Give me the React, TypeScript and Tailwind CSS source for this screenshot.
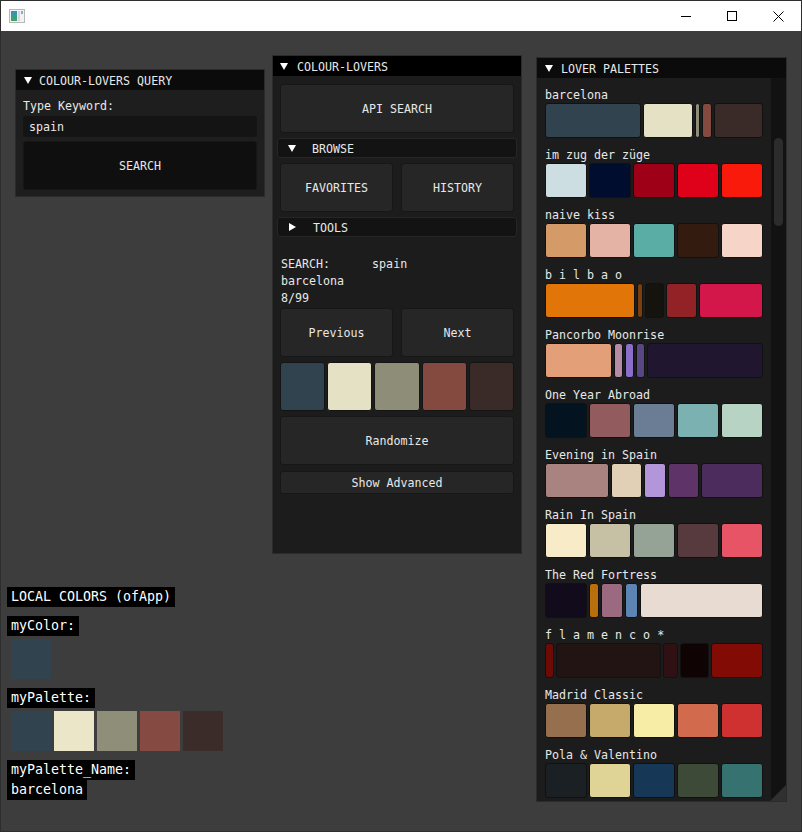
import React from 'react';

type Sw = [string, number];
const palettes: { name: string; c: Sw[] }[] = [
  { name: 'barcelona', c: [['#30434f', 96], ['#e5e1c5', 50], ['#8e8d77', 5], ['#844a40', 10], ['#3a2b28', 49]] },
  { name: 'im zug der züge', c: [['#cddee3', 42], ['#000d2e', 42], ['#9e0018', 42], ['#df0019', 42], ['#f91a0b', 42]] },
  { name: 'naive kiss', c: [['#d49a67', 42], ['#e5b3a6', 42], ['#5aada5', 42], ['#341b10', 42], ['#f6d5c8', 42]] },
  { name: 'b i l b a o', c: [['#e27508', 90], ['#7a3f0c', 6], ['#15130d', 19], ['#922226', 31], ['#d4174b', 64]] },
  { name: 'Pancorbo Moonrise', c: [['#e3a078', 67], ['#b68ba5', 9], ['#8b6ec9', 9], ['#594685', 9], ['#201630', 116]] },
  { name: 'One Year Abroad', c: [['#041320', 42], ['#925b5d', 42], ['#6a7d94', 42], ['#7bb2b1', 42], ['#b6d3c3', 42]] },
  { name: 'Evening in Spain', c: [['#a88380', 64], ['#e1d0b5', 31], ['#b396d9', 22], ['#5e3367', 31], ['#4b2c5c', 62]] },
  { name: 'Rain In Spain', c: [['#f8ecc8', 42], ['#c6c1a5', 42], ['#95a397', 42], ['#573a3d', 42], ['#e75466', 42]] },
  { name: 'The Red Fortress', c: [['#120b1c', 42], ['#b86f0c', 10], ['#9b6a80', 22], ['#5d85b3', 13], ['#e8dbd2', 123]] },
  { name: 'f l a m e n c o *', c: [['#6d0a06', 9], ['#211413', 105], ['#2f1114', 15], ['#0f0403', 29], ['#820b05', 52]] },
  { name: 'Madrid Classic', c: [['#966f4f', 42], ['#c6aa6b', 42], ['#f7eda7', 42], ['#d26b4e', 42], ['#cf3030', 42]] },
  { name: 'Pola & Valentino', c: [['#1a2024', 42], ['#e0d396', 42], ['#173757', 42], ['#3d4a37', 42], ['#367370', 42]] },
];

const local = ['#30434f', '#ece6c9', '#8f8f79', '#854a41', '#3b2c29'];
const mid = ['#30434f', '#e5e1c5', '#8e8d77', '#844a40', '#3a2b28'];

const Down = () => (
  <svg width="8" height="7" viewBox="0 0 8 7" className="shrink-0">
    <polygon points="0,0 8,0 4,7" fill="#ffffff" />
  </svg>
);
const Right = () => (
  <svg width="7" height="8" viewBox="0 0 7 8" className="shrink-0">
    <polygon points="0,0 7,4 0,8" fill="#ffffff" />
  </svg>
);

const Btn = ({ children, className }: { children: React.ReactNode; className: string }) => (
  <div className={`flex items-center justify-center rounded-[3px] bg-[#262626] border border-[#171717] ${className}`}>
    <span className="translate-y-[1px]">{children}</span>
  </div>
);

const Tag = ({ children, className = '' }: { children: React.ReactNode; className?: string }) => (
  <div className={`self-start h-[20px] leading-[20px] px-[4px] bg-black text-white text-[13.3px] whitespace-pre ${className}`}>{children}</div>
);

export default function App() {
  return (
    <div
      className="w-[802px] h-[832px] overflow-hidden bg-[#3d3d3d] border border-[#2e2e2e] flex flex-col text-[#e8e8e8] text-[11.65px] leading-[13px]"
      style={{ fontFamily: '"DejaVu Sans Mono", "Liberation Mono", monospace' }}
    >
      {/* window title bar */}
      <div className="h-[30px] bg-white flex items-center justify-between shrink-0">
        <div className="pl-[8px] flex items-center">
          <svg width="16" height="14" viewBox="0 0 16 14">
            <defs>
              <linearGradient id="ig" x1="0" y1="0" x2="0" y2="1">
                <stop offset="0" stopColor="#3a8fc0" />
                <stop offset="1" stopColor="#3aa860" />
              </linearGradient>
            </defs>
            <rect x="0.5" y="0.5" width="15" height="13" fill="#f2f2f2" stroke="#b8b8b8" />
            <rect x="2" y="2" width="6" height="10" fill="url(#ig)" />
            <rect x="9" y="2" width="2" height="10" fill="#d8d8d8" />
            <rect x="12" y="2" width="2" height="3" fill="#7fb0c8" />
          </svg>
        </div>
        <div className="flex h-full">
          <div className="w-[46px] h-full flex items-center justify-center">
            <svg width="10" height="10" viewBox="0 0 10 10"><line x1="0" y1="5.5" x2="10" y2="5.5" stroke="#000" strokeWidth="1" /></svg>
          </div>
          <div className="w-[46px] h-full flex items-center justify-center">
            <svg width="10" height="10" viewBox="0 0 10 10"><rect x="0.5" y="0.5" width="9" height="9" fill="none" stroke="#000" strokeWidth="1" /></svg>
          </div>
          <div className="w-[46px] h-full flex items-center justify-center">
            <svg width="11" height="11" viewBox="0 0 11 11"><path d="M0.5 0.5 L10.5 10.5 M10.5 0.5 L0.5 10.5" stroke="#000" strokeWidth="1" /></svg>
          </div>
        </div>
      </div>

      {/* canvas */}
      <div className="relative flex-1">
        {/* Left panel */}
        <div className="absolute left-[14px] top-[38px] w-[250px] h-[128px] bg-[#1e1e1e] border border-[#2b2b2b] flex flex-col">
          <div className="h-[20px] bg-[#0b0b0b] flex items-center pl-[8px] gap-[7px] shrink-0">
            <Down />
            <span className="whitespace-pre translate-y-[1px]">COLOUR-LOVERS QUERY</span>
          </div>
          <div className="px-[7px] pt-[10px] flex flex-col">
            <div className="h-[13px] whitespace-pre">Type Keyword:</div>
            <div className="mt-[3px] h-[21px] rounded-[3px] bg-[#141414] flex items-center pl-[6px]"><span className="translate-y-[1px]">spain</span></div>
            <div className="mt-[4px] h-[49px] rounded-[3px] bg-[#0f0f0f] border border-[#161616] flex items-center justify-center"><span className="translate-y-[1px]">SEARCH</span></div>
          </div>
        </div>

        {/* Middle panel */}
        <div className="absolute left-[271px] top-[24px] w-[250px] h-[499px] bg-[#1c1c1c] border border-[#2b2b2b] flex flex-col">
          <div className="h-[20px] bg-black flex items-center pl-[7px] gap-[9px] shrink-0">
            <Down />
            <span className="whitespace-pre translate-y-[1px]">COLOUR-LOVERS</span>
          </div>
          <div className="px-[7px] pt-[8px] flex flex-col">
            <Btn className="h-[49px]">API SEARCH</Btn>
            <div className="mt-[5px] mx-[-3px] h-[20px] rounded-[3px] bg-[#131313] border border-[#262626] flex items-center pl-[10px] gap-[16px]">
              <Down />
              <span className="translate-y-[1px]">BROWSE</span>
            </div>
            <div className="mt-[5px] flex gap-[8px]">
              <Btn className="flex-1 h-[49px]">FAVORITES</Btn>
              <Btn className="flex-1 h-[49px]">HISTORY</Btn>
            </div>
            <div className="mt-[5px] mx-[-3px] h-[20px] rounded-[3px] bg-[#131313] border border-[#262626] flex items-center pl-[11px] gap-[17px]">
              <Right />
              <span className="translate-y-[1px]">TOOLS</span>
            </div>
            <div className="mt-[21px] pl-[1px] flex flex-col gap-[4px]">
              <div className="h-[13px] whitespace-pre">SEARCH:      spain</div>
              <div className="h-[13px]">barcelona</div>
              <div className="h-[13px]">8/99</div>
            </div>
            <div className="mt-[3px] flex gap-[8px]">
              <Btn className="flex-1 h-[49px]">Previous</Btn>
              <Btn className="flex-1 h-[49px]">Next</Btn>
            </div>
            <div className="mt-[5px] flex gap-[2px] h-[49px]">
              {mid.map((c, i) => (
                <div key={i} className="flex-1 rounded-[3px] border border-[#141414]" style={{ backgroundColor: c }} />
              ))}
            </div>
            <Btn className="mt-[5px] h-[49px]">Randomize</Btn>
            <Btn className="mt-[6px] h-[23px]">Show Advanced</Btn>
          </div>
        </div>

        {/* Right panel */}
        <div className="absolute left-[535px] top-[26px] w-[251px] h-[745px] bg-[#1c1c1c] border border-[#2b2b2b] flex flex-col overflow-hidden">
          <div className="h-[20px] bg-[#0b0b0b] flex items-center pl-[8px] gap-[8px] shrink-0">
            <Down />
            <span className="whitespace-pre translate-y-[1px]">LOVER PALETTES</span>
          </div>
          <div className="relative flex flex-1 overflow-hidden">
            <div className="flex-1 pl-[8px] pt-[10px] flex flex-col">
              {palettes.map((p) => (
                <div key={p.name} className="flex flex-col h-[60px] shrink-0">
                  <div className="h-[13px] whitespace-pre translate-y-[1px]">{p.name}</div>
                  <div className="mt-[2px] h-[35px] flex gap-[2px]">
                    {p.c.map(([c, w], i) => (
                      <div
                        key={i}
                        className="shrink-0 rounded-[3px] border border-[#111111]"
                        style={{ backgroundColor: c, width: w }}
                      />
                    ))}
                  </div>
                </div>
              ))}
            </div>
            <div className="relative w-[15px] bg-[#121212] shrink-0">
              <div className="absolute left-[3px] top-[60px] w-[9px] h-[88px] rounded-full bg-[#2c2c2c]" />
            </div>
            <svg width="16" height="16" viewBox="0 0 16 16" className="absolute right-0 bottom-0">
              <polygon points="16,0 16,16 0,16" fill="#303030" />
            </svg>
          </div>
        </div>

        {/* Local colors overlay */}
        <div className="absolute left-[6px] top-[556px] flex flex-col">
          <Tag>LOCAL COLORS (ofApp)</Tag>
          <Tag className="mt-[9px]">myColor:</Tag>
          <div className="mt-[3px] ml-[4px] w-[40px] h-[40px]" style={{ backgroundColor: local[0] }} />
          <Tag className="mt-[9px]">myPalette:</Tag>
          <div className="mt-[3px] ml-[4px] flex gap-[3px]">
            {local.map((c, i) => (
              <div key={i} className="w-[40px] h-[40px]" style={{ backgroundColor: c }} />
            ))}
          </div>
          <Tag className="mt-[9px]">myPalette_Name:</Tag>
          <Tag>barcelona</Tag>
        </div>
      </div>
    </div>
  );
}
